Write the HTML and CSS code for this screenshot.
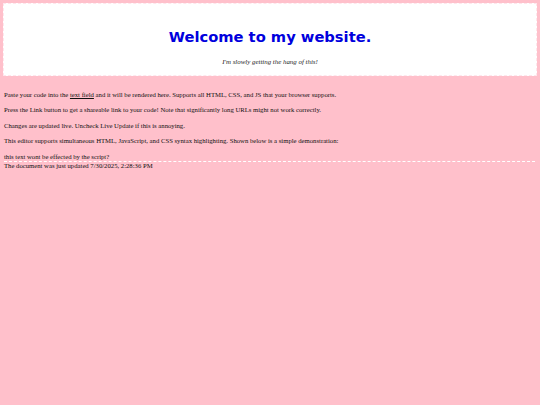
FILE: index.html
```html
<!DOCTYPE html>
<html>
<head>
<meta charset="utf-8">
<link rel="stylesheet" href="styles.css">
</head>
<body>
<div class="header">
  <h1 class="title">Welcome to my website.</h1>
  <p class="subtitle">I'm slowly getting the hang of this!</p>
</div>
<div class="content">
  <p class="para">Paste your code into the <span class="link">text field</span> and it will be rendered here. Supports all HTML, CSS, and JS that your browser supports.</p>
  <p class="para">Press the Link button to get a shareable link to your code! Note that significantly long URLs might not work correctly.</p>
  <p class="para">Changes are updated live. Uncheck Live Update if this is annoying.</p>
  <p class="para">This editor supports simultaneous HTML, JavaScript, and CSS syntax highlighting. Shown below is a simple demonstration:</p>
  <div class="demo">this text wont be effected by the script?</div>
  <div class="date">The document was just updated 7/30/2025, 2:28:36 PM</div>
</div>
</body>
</html>
```

FILE: styles.css
```css
html, body {
  background: #ffc0cb;
}
body {
  margin: 3px;
  font-family: "Liberation Serif", "Times New Roman", serif;
  font-size: 6.7px;
  color: #111;
}
.header {
  background: #fff;
  border: 1px dashed #ffe6ec;
  height: 71px;
  text-align: center;
  display: flex;
  flex-direction: column;
  align-items: center;
}
.title {
  margin: 24px 0 0;
  font-family: "DejaVu Sans", Verdana, sans-serif;
  font-weight: bold;
  font-size: 14.7px;
  line-height: 18px;
  color: #0000dd;
}
.subtitle {
  margin: 12px 0 0;
  font-style: italic;
  font-size: 6.9px;
  line-height: 8px;
  color: #222;
}
.content {
  padding: 15px 1px 0;
}
.para {
  margin: 0 0 7.3px;
  line-height: 8px;
}
.link {
  text-decoration: underline;
}
.demo {
  line-height: 8px;
  padding-top: 1px;
  border-bottom: 1px dashed #fff;
  margin: 0 -4px 0 0;
}
.date {
  line-height: 8px;
}
```
